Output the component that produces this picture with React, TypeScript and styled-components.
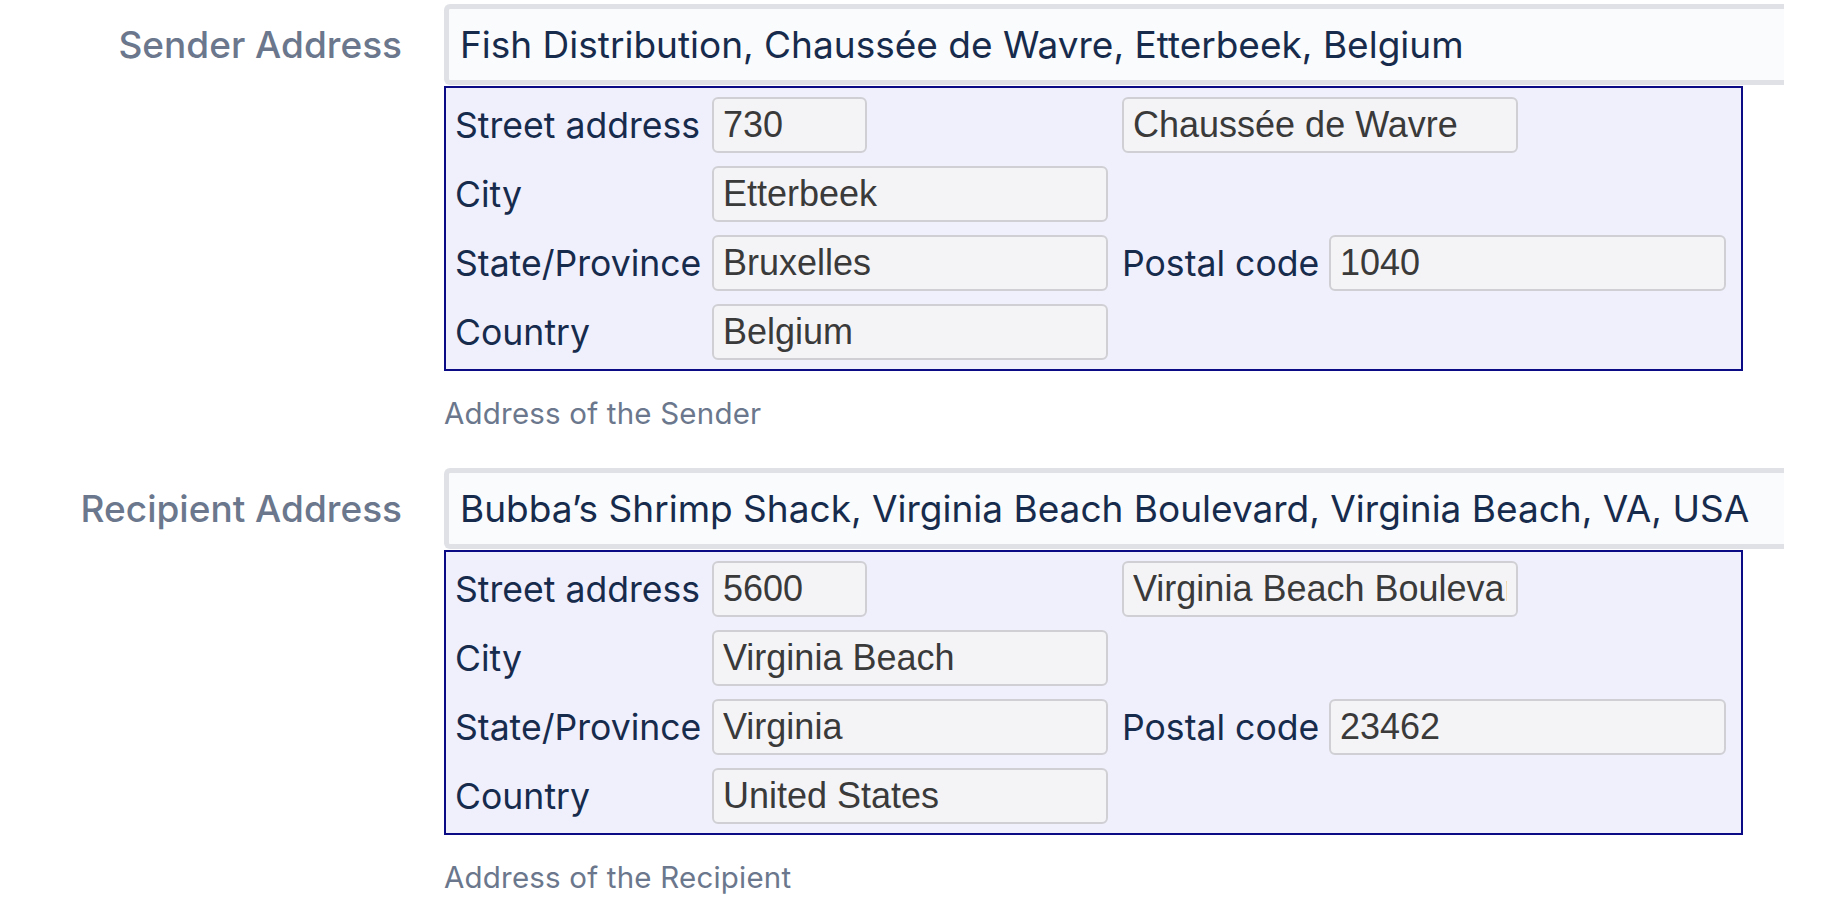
import styled, { createGlobalStyle } from "styled-components";

const GlobalStyle = createGlobalStyle`
  html, body {
    margin: 0;
    padding: 0;
    background: #ffffff;
  }
  body {
    font-family: "Inter", "Noto Sans", sans-serif;
  }
`;

const Form = styled.form`
  display: flex;
  flex-direction: column;
  gap: 38px;
  padding-top: 4px;
`;

const FieldRow = styled.div`
  display: grid;
  grid-template-columns: 402px 1340px;
  column-gap: 42px;
  align-items: start;
`;

const FieldLabel = styled.label`
  height: 81px;
  display: flex;
  align-items: center;
  justify-content: flex-end;
  font-size: 37px;
  font-weight: 500;
  color: #6b778c;
  white-space: nowrap;
`;

const FieldBody = styled.div`
  display: flex;
  flex-direction: column;
  min-width: 0;
`;

const SummaryInput = styled.input`
  box-sizing: border-box;
  width: 100%;
  height: 81px;
  margin: 0;
  padding: 0 11px;
  border: 5px solid #dfe1e6;
  border-right: none;
  border-radius: 6px 0 0 6px;
  background: #fafbfc;
  font-family: "Inter", "Noto Sans", sans-serif;
  font-size: 37px;
  color: #172b4d;
  outline: none;
`;

const AddressBox = styled.div`
  box-sizing: border-box;
  width: 1299px;
  margin-top: 1px;
  padding: 9px;
  border: 2px solid #0b0b85;
  background: #f0f0fd;
  display: flex;
  flex-direction: column;
  gap: 13px;
`;

const AddressRow = styled.div`
  display: grid;
  grid-template-columns: 243px 396px 193px 397px;
  column-gap: 14px;
  align-items: center;
`;

const PartLabel = styled.span`
  font-size: 35.6px;
  color: #172b4d;
  white-space: nowrap;
`;

const PartInput = styled.input<{ $width?: number; $wide?: boolean }>`
  box-sizing: border-box;
  width: ${(p) => (p.$width ? `${p.$width}px` : "100%")};
  height: 56px;
  margin: 0;
  padding: 0 9px;
  border: 2px solid #d0d0d4;
  border-radius: 6px;
  background: #f4f4f7;
  font-family: "Liberation Sans", Arial, sans-serif;
  font-size: 36px;
  color: #3a3a3a;
  outline: none;
  grid-column: ${(p) => (p.$wide ? "3 / span 2" : "auto")};
`;

const HelpText = styled.div`
  margin-top: 25px;
  font-size: 29.5px;
  letter-spacing: 0.2px;
  line-height: 34px;
  color: #6b778c;
`;

type Address = {
  label: string;
  summary: string;
  number: string;
  street: string;
  city: string;
  state: string;
  postal: string;
  country: string;
  help: string;
};

const addresses: Address[] = [
  {
    label: "Sender Address",
    summary: "Fish Distribution, Chaussée de Wavre, Etterbeek, Belgium",
    number: "730",
    street: "Chaussée de Wavre",
    city: "Etterbeek",
    state: "Bruxelles",
    postal: "1040",
    country: "Belgium",
    help: "Address of the Sender",
  },
  {
    label: "Recipient Address",
    summary: "Bubba’s Shrimp Shack, Virginia Beach Boulevard, Virginia Beach, VA, USA",
    number: "5600",
    street: "Virginia Beach Boulevard",
    city: "Virginia Beach",
    state: "Virginia",
    postal: "23462",
    country: "United States",
    help: "Address of the Recipient",
  },
];

const AddressField = ({ a }: { a: Address }) => (
  <FieldRow>
    <FieldLabel>{a.label}</FieldLabel>
    <FieldBody>
      <SummaryInput readOnly value={a.summary} />
      <AddressBox>
        <AddressRow>
          <PartLabel>Street address</PartLabel>
          <PartInput readOnly value={a.number} $width={155} />
          <PartInput readOnly value={a.street} $width={396} $wide />
        </AddressRow>
        <AddressRow>
          <PartLabel>City</PartLabel>
          <PartInput readOnly value={a.city} />
        </AddressRow>
        <AddressRow>
          <PartLabel>State/Province</PartLabel>
          <PartInput readOnly value={a.state} />
          <PartLabel>Postal code</PartLabel>
          <PartInput readOnly value={a.postal} />
        </AddressRow>
        <AddressRow>
          <PartLabel>Country</PartLabel>
          <PartInput readOnly value={a.country} />
        </AddressRow>
      </AddressBox>
      <HelpText>{a.help}</HelpText>
    </FieldBody>
  </FieldRow>
);

export default function App() {
  return (
    <>
      <GlobalStyle />
      <Form onSubmit={(e) => e.preventDefault()}>
        {addresses.map((a) => (
          <AddressField key={a.label} a={a} />
        ))}
      </Form>
    </>
  );
}
